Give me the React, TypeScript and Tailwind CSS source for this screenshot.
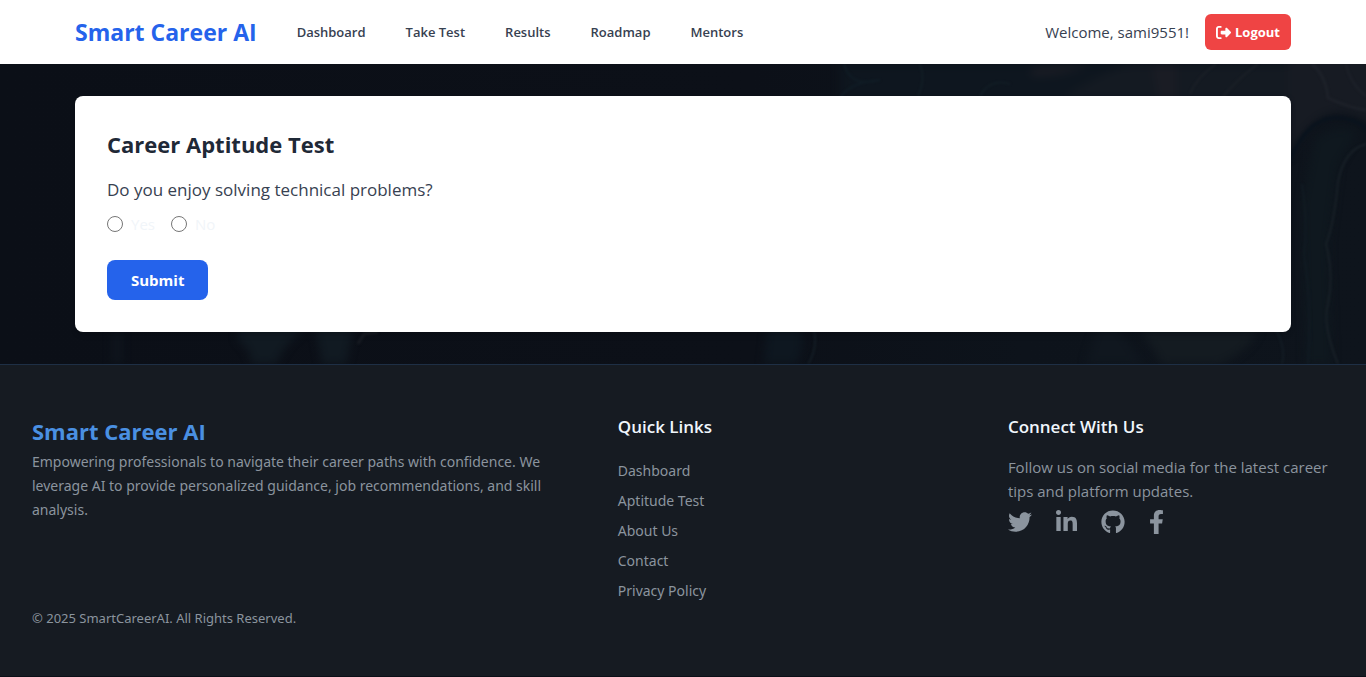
import React from "react";
import { FaFacebookF, FaGithub, FaLinkedinIn, FaTwitter } from "react-icons/fa";
import { FaRightFromBracket } from "react-icons/fa6";

const navLinks = ["Dashboard", "Take Test", "Results", "Roadmap", "Mentors"];
const quickLinks = ["Dashboard", "Aptitude Test", "About Us", "Contact", "Privacy Policy"];
const socials = [
  { label: "Twitter", Icon: FaTwitter, size: "h-6 w-6" },
  { label: "LinkedIn", Icon: FaLinkedinIn, size: "h-6 w-[21px]" },
  { label: "GitHub", Icon: FaGithub, size: "h-6 w-6" },
  { label: "Facebook", Icon: FaFacebookF, size: "h-6 w-[15px]" },
];

function Header() {
  return (
    <header className="bg-white">
      <div className="mx-auto flex h-16 max-w-[1280px] items-center justify-between px-8">
        <div className="flex items-center gap-10">
          <a href="#" className="text-[23px] leading-8 font-bold text-[#2563eb]">Smart Career AI</a>
          <nav className="flex items-center gap-10">
            {navLinks.map((item) => (
              <a key={item} href="#" className="text-[13px] leading-5 font-semibold text-[#374151]">{item}</a>
            ))}
          </nav>
        </div>
        <div className="flex items-center gap-4">
          <span className="text-[15px] leading-6 text-[#374151]">Welcome, sami9551!</span>
          <button type="button" className="flex h-9 items-center gap-1 rounded-md bg-[#ef4444] px-[11px] text-[13px] leading-5 font-bold text-white">
            <FaRightFromBracket className="size-[15px]" />
            Logout
          </button>
        </div>
      </div>
    </header>
  );
}

function MarbleBackdrop() {
  return (
    <svg className="absolute inset-0 h-full w-full" viewBox="0 0 1366 300" preserveAspectRatio="none" aria-hidden="true">
      <defs>
        <linearGradient id="base" x1="0" y1="0" x2="1" y2="0">
          <stop offset="0" stopColor="#0b0f17" />
          <stop offset="0.55" stopColor="#0c1018" />
          <stop offset="0.75" stopColor="#0d131b" />
          <stop offset="1" stopColor="#0e141c" />
        </linearGradient>
        <filter id="soft" x="-20%" y="-20%" width="140%" height="140%" colorInterpolationFilters="sRGB">
          <feGaussianBlur stdDeviation="4" />
        </filter>
        <filter id="vein" x="-20%" y="-20%" width="140%" height="140%" colorInterpolationFilters="sRGB">
          <feGaussianBlur stdDeviation="1" />
        </filter>
      </defs>
      <rect width="1366" height="300" fill="url(#base)" />
      <g filter="url(#soft)">
        <path d="M840 0 H1150 V36 H840 Z" fill="#0e161f" />
        <path d="M1130 0 H1291 V36 H1060 Q1090 14 1130 0 Z" fill="#141a22" />
        <path d="M1030 4 Q1060 0 1090 0 Q1060 14 1032 12 Z" fill="#1a1c24" />
        <path d="M1152 0 H1176 V36 H1158 Z" fill="#1a1c24" />
        <path d="M238 262 H314 Q318 274 322 300 H346 L354 262 H310 Q286 276 276 300 H252 Q250 284 238 276 Z" fill="#111a22" />
        <path d="M112 266 H122 V300 H112 Z" fill="#0f151d" />
        <path d="M768 262 H800 Q806 285 796 300 H764 Z" fill="#0e1720" />
        <path d="M1098 262 H1116 L1144 300 H1086 Z" fill="#10171f" />
        <path d="M1140 266 H1258 Q1250 286 1220 300 H1162 Q1152 282 1140 266 Z" fill="#141b21" />
        <path d="M1288 -8 H1374 V60 Q1336 34 1308 64 Q1290 86 1288 96 Z" fill="#171b23" />
        <path d="M1314 78 Q1330 58 1358 68 L1338 100 L1328 180 L1332 300 H1306 L1302 140 Z" fill="#0f181f" />
      </g>
      <g fill="none" stroke="#182027" strokeWidth="2" filter="url(#vein)">
        <path d="M1290 96 Q1310 50 1340 54 Q1360 56 1366 66" stroke="#0a131d" strokeWidth="4" />
        <path d="M1366 80 Q1344 86 1338 118 Q1334 160 1326 180 Q1334 210 1328 240 Q1322 260 1338 300" />
        <path d="M1302 120 Q1308 160 1304 190 Q1312 240 1308 300" stroke="#111b23" />
        <path d="M1312 0 Q1326 12 1328 34 Q1350 44 1366 46" stroke="#1d2129" strokeWidth="3" />
        <path d="M1346 0 Q1350 20 1366 32" stroke="#1d2129" />
        <path d="M1190 30 Q1196 14 1216 0 M1222 34 Q1236 16 1258 0" stroke="#1b2027" />
        <path d="M840 34 Q850 18 880 16 Q850 24 844 0" stroke="#101c25" />
        <path d="M918 32 Q926 16 920 0 M980 32 Q990 14 1010 20" stroke="#121d25" />
        <path d="M808 300 Q818 284 814 266 M1282 300 Q1286 284 1276 266" stroke="#131c24" />
        <path d="M358 280 L364 270 L378 268" stroke="#171b22" strokeWidth="3" />
      </g>
    </svg>
  );
}

function AptitudeTest() {
  return (
    <section className="relative rounded-lg bg-white p-8 shadow-md">
      <h1 className="mb-4 text-[22px] leading-8 font-bold text-[#1f2937]">Career Aptitude Test</h1>
      <form>
        <fieldset>
          <legend className="mb-2 text-[17px] leading-7 text-[#374151]">Do you enjoy solving technical problems?</legend>
          <div className="flex items-center gap-4 text-[15px] leading-6 text-slate-100">
            <label className="flex items-center gap-2">
              <input type="radio" name="technical" value="yes" className="size-4" />
              Yes
            </label>
            <label className="flex items-center gap-2">
              <input type="radio" name="technical" value="no" className="size-4" />
              No
            </label>
          </div>
        </fieldset>
        <button type="button" className="mt-6 block h-10 rounded-lg bg-[#2563eb] px-6 text-[15px] leading-6 font-bold text-white">Submit</button>
      </form>
    </section>
  );
}

function Footer() {
  return (
    <footer className="border-t border-[#1e2f45] bg-[#161b22] px-8 py-12 text-[#8b949e]">
      <div className="grid grid-cols-[1.6fr_1fr_1fr] gap-x-16">
        <div>
          <h2 className="mt-1 text-[22px] leading-7 font-bold text-[#4a90e2]">Smart Career AI</h2>
          <p className="mt-[5px] font-['Noto_Sans',sans-serif] text-[14px] leading-6">
            Empowering professionals to navigate their career paths with confidence. We leverage AI to provide
            personalized guidance, job recommendations, and skill analysis.
          </p>
        </div>
        <div>
          <h3 className="mb-[18px] text-[17px] leading-7 font-semibold text-[#f0f6fc]">Quick Links</h3>
          <ul className="flex flex-col gap-[6px]">
            {quickLinks.map((item) => (
              <li key={item} className="font-['Noto_Sans',sans-serif] text-[14px] leading-6">
                <a href="#">{item}</a>
              </li>
            ))}
          </ul>
        </div>
        <div>
          <h3 className="mb-[14px] text-[17px] leading-7 font-semibold text-[#f0f6fc]">Connect With Us</h3>
          <p className="text-[15px] leading-6">Follow us on social media for the latest career tips and platform updates.</p>
          <div className="mt-[7px] flex items-center gap-6">
            {socials.map(({ label, Icon, size }) => (
              <a key={label} href="#" aria-label={label}>
                <Icon className={size} />
              </a>
            ))}
          </div>
        </div>
      </div>
      <p className="mt-[5px] font-['Noto_Sans',sans-serif] text-[13px] leading-5">© 2025 SmartCareerAI. All Rights Reserved.</p>
    </footer>
  );
}

export default function App() {
  return (
    <div className="min-h-screen bg-[#0b0f17] font-['Open_Sans','Noto_Sans',sans-serif]">
      <Header />
      <main className="relative py-8">
        <MarbleBackdrop />
        <div className="mx-auto max-w-[1280px] px-8">
          <AptitudeTest />
        </div>
      </main>
      <Footer />
    </div>
  );
}
